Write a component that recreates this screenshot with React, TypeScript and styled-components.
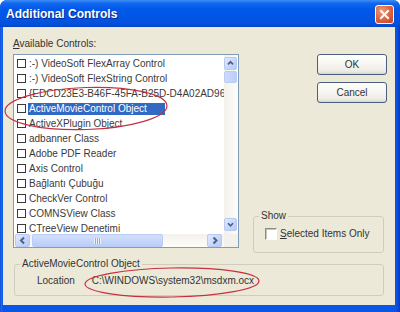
import React, { FC } from 'react';
import styled, { createGlobalStyle } from 'styled-components';

const GlobalStyle = createGlobalStyle`
  html, body {
    margin: 0;
    padding: 0;
    background: #ffffff;
  }
  body {
    font-family: "Liberation Sans", Arial, sans-serif;
    font-size: 10px;
    color: #1e1e1e;
  }
`;

const controls = [
    ':-) VideoSoft FlexArray Control',
    ':-) VideoSoft FlexString Control',
    '{EDCD23E3-B46F-45FA-B25D-D4A02AD96C5F}',
    'ActiveMovieControl Object',
    'ActiveXPlugin Object',
    'adbanner Class',
    'Adobe PDF Reader',
    'Axis Control',
    'Bağlantı Çubuğu',
    'CheckVer Control',
    'COMNSView Class',
    'CTreeView Denetimi',
];

type ArrowProps = { dir: 'up' | 'down' | 'left' | 'right' };

const Arrow: FC<ArrowProps> = ({ dir }) => {
    const points = {
        up: '3.5,7.5 6.5,4.5 9.5,7.5',
        down: '3.5,5 6.5,8 9.5,5',
        left: '8,3.5 5,6.5 8,9.5',
        right: '5.5,3.5 8.5,6.5 5.5,9.5',
    }[dir];
    return (
        <svg width="13" height="13" viewBox="0 0 13 13">
            <polyline points={points} fill="none" stroke="#4D6185" strokeWidth="2" />
        </svg>
    );
};

const App: FC = () => {
    return (
        <>
            <GlobalStyle />
            <Window>
                <TitleBar>
                    <Title>Additional Controls</Title>
                    <CloseButton>
                        <svg width="11" height="11" viewBox="0 0 11 11">
                            <path d="M2 2 L9 9 M9 2 L2 9" stroke="#fff" strokeWidth="2" strokeLinecap="square" />
                        </svg>
                    </CloseButton>
                </TitleBar>
                <Body>
                    <TopRow>
                        <LeftCol>
                            <FieldLabel><u>A</u>vailable Controls:</FieldLabel>
                            <ListBox>
                                <Items>
                                    {controls.map((name, i) => (
                                        <Item key={name}>
                                            <SmallCheck />
                                            <ItemText selected={i === 3}>{name}</ItemText>
                                        </Item>
                                    ))}
                                </Items>
                                <VScroll>
                                    <ScrollButton><Arrow dir="up" /></ScrollButton>
                                    <VThumb />
                                    <Spacer />
                                    <ScrollButton><Arrow dir="down" /></ScrollButton>
                                </VScroll>
                                <HScroll>
                                    <ScrollButton wide><Arrow dir="left" /></ScrollButton>
                                    <HThumb><Grip /></HThumb>
                                    <Spacer />
                                    <ScrollButton wide><Arrow dir="right" /></ScrollButton>
                                </HScroll>
                                <Corner />
                            </ListBox>
                        </LeftCol>
                        <RightCol>
                            <Button>OK</Button>
                            <Button>Cancel</Button>
                            <ShowGroup>
                                <Legend>Show</Legend>
                                <CheckRow>
                                    <BigCheck />
                                    <span><u>S</u>elected Items Only</span>
                                </CheckRow>
                            </ShowGroup>
                        </RightCol>
                    </TopRow>
                    <InfoGroup>
                        <Legend>ActiveMovieControl Object</Legend>
                        <InfoRow>
                            <span>Location</span>
                            <span>{'C:\\WINDOWS\\system32\\msdxm.ocx'}</span>
                        </InfoRow>
                    </InfoGroup>
                </Body>
                <Marks width="400" height="312" viewBox="0 0 400 312">
                    <ellipse cx="86" cy="108.5" rx="81" ry="21" transform="rotate(-2 86 108.5)" />
                    <ellipse cx="172" cy="282.5" rx="87" ry="14.5" transform="rotate(-1 172 282.5)" />
                </Marks>
            </Window>
        </>
    );
};

const Window = styled.div`
    position: relative;
    width: 400px;
    height: 312px;
    display: flex;
    flex-direction: column;
    background: linear-gradient(90deg, #0841C9 0, #1C6CF0 1px, #0857E6 3px, #0857E6 395px, #0A4BD8 398px, #0735B0 400px);
    border-radius: 7px 7px 0 0;
    overflow: hidden;
`;

const TitleBar = styled.div`
    height: 27px;
    flex: none;
    display: flex;
    align-items: center;
    justify-content: space-between;
    padding: 0 6px 0 6px;
    background: linear-gradient(180deg, #3D8DF5 0%, #1168EE 12%, #0058EA 35%, #0055E3 70%, #0450DA 90%, #0342C4 100%);
`;

const Title = styled.div`
    font-family: "Liberation Sans", Arial, sans-serif;
    font-weight: bold;
    font-size: 12px;
    color: #ffffff;
    text-shadow: 1px 1px 0 #0A2A8C;
`;

const CloseButton = styled.div`
    width: 19px;
    height: 19px;
    box-sizing: border-box;
    margin-top: 1px;
    display: flex;
    align-items: center;
    justify-content: center;
    border: 1px solid #ffffff;
    border-radius: 3px;
    background: radial-gradient(circle at 35% 30%, #F09A7C 0%, #DF6A47 45%, #C8401F 100%);
`;

const Body = styled.div`
    flex: 1;
    margin: 0 5px 7px 3px;
    padding-top: 11px;
    background: #ECE9D8;
    display: flex;
    flex-direction: column;
`;

const TopRow = styled.div`
    height: 215px;
    display: flex;
    gap: 14px;
    padding-left: 10px;
`;

const LeftCol = styled.div`
    width: 226px;
    display: flex;
    flex-direction: column;
`;

const FieldLabel = styled.div`
    height: 16px;
    line-height: 12px;
    color: #333;
`;

const ListBox = styled.div`
    height: 194px;
    box-sizing: border-box;
    border: 1px solid #7F9DB9;
    background: #ffffff;
    display: grid;
    grid-template-columns: 1fr 14px;
    grid-template-rows: 1fr 13px;
`;

const Items = styled.div`
    overflow: hidden;
    padding: 1px 0 0 3px;
`;

const Item = styled.div`
    height: 15px;
    display: flex;
    align-items: center;
    white-space: nowrap;
`;

const SmallCheck = styled.span`
    flex: none;
    width: 9px;
    height: 9px;
    box-sizing: border-box;
    border: 1px solid #3A3A3A;
    background: #fff;
    margin-right: 2px;
`;

const ItemText = styled.span<{ selected?: boolean }>`
    line-height: 12px;
    padding: 0 ${p => (p.selected ? '18px' : '1px')} 0 1px;
    background: ${p => (p.selected ? '#316AC5' : 'transparent')};
    color: ${p => (p.selected ? '#ffffff' : '#3a3a3a')};
`;

const VScroll = styled.div`
    display: flex;
    flex-direction: column;
    padding: 2px 1px 3px 0;
    background: linear-gradient(90deg, #F3F1EA, #FDFDFA);
`;

const HScroll = styled.div`
    display: flex;
    align-items: stretch;
    padding: 0 2px 0 1px;
    background: linear-gradient(180deg, #F3F1EA, #FDFDFA);
`;

const Corner = styled.div`
    background: #F3F1EA;
`;

const Spacer = styled.div`
    flex: 1;
`;

const ScrollButton = styled.div<{ wide?: boolean }>`
    width: ${p => (p.wide ? '15px' : '13px')};
    height: 13px;
    box-sizing: border-box;
    display: flex;
    align-items: center;
    justify-content: center;
    border: 1px solid #B7CAF5;
    border-radius: 2px;
    background: linear-gradient(135deg, #E2EAFE 0%, #C7D6FC 55%, #B6C9F7 100%);
`;

const VThumb = styled.div`
    height: 10px;
    margin-top: 1px;
    border: 1px solid #B9CCF6;
    border-radius: 2px;
    background: linear-gradient(90deg, #CCDAFD, #BCCEF9);
`;

const HThumb = styled.div`
    width: 131px;
    margin-left: 2px;
    box-sizing: border-box;
    border: 1px solid #B9CCF6;
    border-radius: 2px;
    background: linear-gradient(180deg, #D3DFFD, #BACCF8);
    display: flex;
    align-items: center;
    justify-content: center;
`;

const Grip = styled.div`
    width: 7px;
    height: 6px;
    background: repeating-linear-gradient(90deg, #EEF3FE 0 1px, #93A9DB 1px 2px);
`;

const RightCol = styled.div`
    width: 134px;
    display: flex;
    flex-direction: column;
    align-items: flex-end;
    gap: 7px;
    padding-top: 16px;
    box-sizing: border-box;
`;

const Button = styled.div`
    width: 70px;
    height: 21px;
    box-sizing: border-box;
    display: flex;
    align-items: center;
    justify-content: center;
    border: 1px solid #4A5F80;
    border-radius: 3px;
    background: linear-gradient(180deg, #FFFFFF 0%, #F6F5F1 50%, #ECEBE5 85%, #D8D4C8 100%);
    color: #333;
`;

const Group = styled.fieldset`
    margin: 0;
    border: 1px solid #D0CDBE;
    border-radius: 3px;
    min-inline-size: 0;
    padding-left: 4px;
`;

const Legend = styled.legend`
    padding: 0 2px;
    margin-left: 1px;
    line-height: 12px;
    color: #333;
`;

const ShowGroup = styled(Group)`
    margin-top: auto;
    margin-right: 3px;
    width: 131px;
    box-sizing: border-box;
    padding-top: 5px;
    padding-bottom: 12px;
`;

const CheckRow = styled.div`
    display: flex;
    align-items: center;
    gap: 3px;
    margin-left: 7px;
    color: #333;
    line-height: 13px;
`;

const BigCheck = styled.span`
    width: 12px;
    height: 12px;
    box-sizing: border-box;
    border: 1px solid;
    border-color: #8E8C80 #FFFFFF #FFFFFF #8E8C80;
    box-shadow: inset 1px 1px 0 #C8C5B8;
    background: #ffffff;
`;

const InfoGroup = styled(Group)`
    margin: 5px 11px 0 11px;
    padding-top: 5px;
    padding-bottom: 8px;
`;

const InfoRow = styled.div`
    display: flex;
    gap: 17px;
    margin-left: 18px;
    line-height: 12px;
    color: #333;
`;

const Marks = styled.svg`
    position: absolute;
    left: 0;
    top: 0;
    pointer-events: none;
    ellipse {
        fill: none;
        stroke: #C53141;
        stroke-width: 1.2;
    }
`;

export default App;
